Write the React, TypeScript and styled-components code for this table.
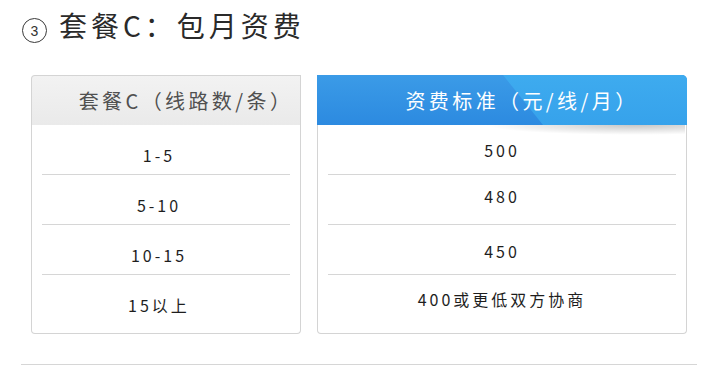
import React from "react";
import styled, { createGlobalStyle } from "styled-components";

const GlobalStyle = createGlobalStyle`
  html, body {
    margin: 0;
    padding: 0;
    background: #fff;
  }
  body {
    font-family: "Noto Sans CJK SC", "Noto Sans", sans-serif;
    color: #333;
  }
`;

const Page = styled.div`
  width: 676px;
  padding: 0 23px 0 21px;
`;

const TitleRow = styled.div`
  display: flex;
  align-items: flex-start;
  gap: 12px;
  padding: 11px 0 0 1px;
`;

const StepBadge = styled.span`
  box-sizing: border-box;
  width: 25px;
  height: 25px;
  margin-top: 7px;
  border: 1.5px solid #3a3a3a;
  border-radius: 50%;
  display: flex;
  align-items: center;
  justify-content: center;
  font-family: "Liberation Sans", sans-serif;
  font-size: 14px;
  line-height: 1;
  color: #333;
`;

const Title = styled.h1`
  margin: 0;
  font-size: 28px;
  line-height: 28px;
  font-weight: 400;
  letter-spacing: 4px;
  color: #2a2a2a;
`;

const Cards = styled.div`
  display: flex;
  gap: 16px;
  padding: 0 10px;
  margin-top: 32px;
`;

const Card = styled.div<{ $width: number }>`
  width: ${(p) => p.$width}px;
  display: flex;
  flex-direction: column;
`;

const GrayHeader = styled.div`
  box-sizing: border-box;
  height: 50px;
  border: 1px solid #d4d4d4;
  border-bottom: none;
  border-radius: 4px 0 0 0;
  background: linear-gradient(#f2f2f2, #eaeaea);
  display: flex;
  align-items: center;
  justify-content: center;
  padding-left: 40px;
  font-size: 20px;
  letter-spacing: 3.4px;
  color: #505050;
`;

const BlueHeader = styled.div`
  position: relative;
  box-sizing: border-box;
  height: 50px;
  border-radius: 0 5px 0 0;
  background: linear-gradient(#3b9be7, #2c8ae0);
  display: flex;
  align-items: center;
  justify-content: center;
  padding-left: 40px;
  font-size: 20px;
  letter-spacing: 3.4px;
  color: #fff;

  /* lighter diagonal panel on the right */
  &::before {
    content: "";
    position: absolute;
    inset: 0;
    border-radius: inherit;
    background: linear-gradient(#3eabef, #36a2eb);
    clip-path: polygon(186px 0, 100% 0, 100% 100%, 226px 100%);
  }

  /* curled shadow under the header */
  &::after {
    content: "";
    position: absolute;
    top: 100%;
    left: 45%;
    right: 2px;
    height: 10px;
    background: radial-gradient(
      ellipse at 75% 0%,
      rgba(0, 0, 0, 0.22),
      rgba(0, 0, 0, 0) 70%
    );
  }
`;

const HeaderLabel = styled.span`
  position: relative;
`;

const Body = styled.div`
  border: 1px solid #d4d4d4;
  border-top: none;
  border-radius: 0 0 4px 4px;
`;

const Row = styled.div<{ $shift: number; $last?: boolean; $offsetX?: number }>`
  box-sizing: border-box;
  height: ${(p) => (p.$last ? 58 : 50)}px;
  margin: 0 10px;
  border-bottom: ${(p) => (p.$last ? "none" : "1px solid #d6d6d6")};
  display: flex;
  align-items: center;
  justify-content: center;
  padding-top: ${(p) => Math.max(0, p.$shift * 2)}px;
  padding-bottom: ${(p) => Math.max(0, -p.$shift * 2)}px;
  padding-right: ${(p) => p.$offsetX ?? 0}px;
  font-size: 16px;
  letter-spacing: 3px;
  color: #1e1e1e;
`;

const Rule = styled.hr`
  margin: 30px 0 0;
  border: none;
  border-top: 1px solid #d6d6d6;
  height: 0;
`;

const lineRows = [
  { text: "1-5", shift: 5 },
  { text: "5-10", shift: 5 },
  { text: "10-15", shift: 5 },
  { text: "15以上", shift: 1 },
];

const priceRows = [
  { text: "500", shift: 0 },
  { text: "480", shift: -4 },
  { text: "450", shift: 1 },
  { text: "400或更低双方协商", shift: -5 },
];

export default function App() {
  return (
    <Page>
      <GlobalStyle />
      <TitleRow>
        <StepBadge>3</StepBadge>
        <Title>套餐C：包月资费</Title>
      </TitleRow>

      <Cards>
        <Card $width={270}>
          <GrayHeader>套餐C（线路数/条）</GrayHeader>
          <Body>
            {lineRows.map((r, i) => (
              <Row
                key={r.text}
                $shift={r.shift}
                $offsetX={14}
                $last={i === lineRows.length - 1}
              >
                {r.text}
              </Row>
            ))}
          </Body>
        </Card>

        <Card $width={370}>
          <BlueHeader>
            <HeaderLabel>资费标准（元/线/月）</HeaderLabel>
          </BlueHeader>
          <Body>
            {priceRows.map((r, i) => (
              <Row key={r.text} $shift={r.shift} $last={i === priceRows.length - 1}>
                {r.text}
              </Row>
            ))}
          </Body>
        </Card>
      </Cards>

      <Rule />
    </Page>
  );
}
